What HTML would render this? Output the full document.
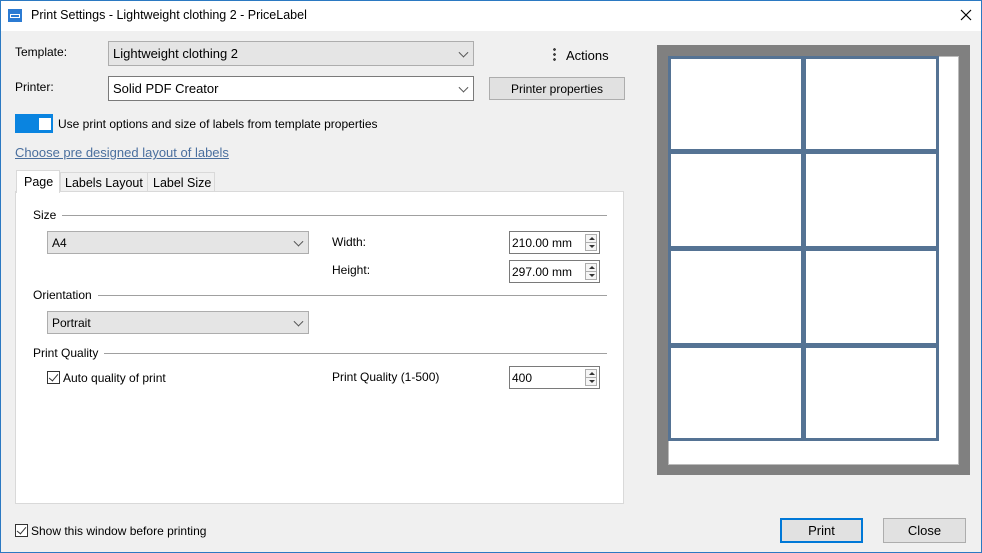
<!DOCTYPE html>
<html><head><style>
*{box-sizing:border-box;margin:0;padding:0}
body{width:982px;height:553px;overflow:hidden;background:#f0f0f0;font-family:"Liberation Sans",Arial,sans-serif;font-size:12px;color:#000;position:relative}
.a{position:absolute}
.combo{position:absolute;border:1px solid #adadad;background:#e5e5e5;padding-left:4px;display:flex;align-items:center;font-size:13px}
.combo.w{background:#fff;border-color:#7a7a7a}
.chev{position:absolute;right:6px;top:50%;width:7px;height:7px;border-right:1px solid #555;border-bottom:1px solid #555;transform:translateY(-70%) rotate(45deg)}
.spin{position:absolute;background:#fff;border:1px solid #7a7a7a;padding-left:2px;display:flex;align-items:center;font-size:12px}
.sb{position:absolute;right:2px;top:2px;width:12px;height:17px;border:1px solid #adadad;background:#f5f5f5}
.sb:before{content:"";position:absolute;left:3px;top:2px;border:3px solid transparent;border-bottom:3px solid #333;border-top:0}
.sb:after{content:"";position:absolute;left:3px;bottom:2px;border:3px solid transparent;border-top:3px solid #333;border-bottom:0}
.sb i{position:absolute;left:0;right:0;top:7px;border-top:1px solid #adadad}
.grp{position:absolute;height:1px}
.grp span{position:absolute;left:0;top:-7px;background:#fff;padding-right:6px}
.grp b{position:absolute;left:0;right:0;top:0;border-top:1px solid #a0a0a0}
.cb{position:absolute;width:13px;height:13px;border:1px solid #333;background:#fff}
.cb:after{content:"";position:absolute;left:3px;top:0px;width:4px;height:8px;border-right:1.3px solid #333;border-bottom:1.3px solid #333;transform:rotate(40deg)}
.btn{position:absolute;background:#e1e1e1;border:1px solid #adadad;display:flex;align-items:center;justify-content:center;font-size:12px}
</style></head><body>
<div class="a" style="left:0;top:0;width:982px;height:553px;border:1px solid #2b79c2"></div>
<div class="a" style="left:1px;top:1px;width:980px;height:30px;background:#fff"></div>
<div class="a" style="left:8px;top:9px;width:14px;height:13px;background:#2b7bd3"><div class="a" style="left:2px;top:5px;width:10px;height:4px;border:1px solid #fff"></div></div>
<div class="a" style="left:31px;top:8px;font-size:12.5px">Print Settings - Lightweight clothing 2 - PriceLabel</div>
<svg class="a" style="left:960px;top:9px" width="12" height="12"><path d="M1 1L11 11M11 1L1 11" stroke="#000" stroke-width="1.2"/></svg>

<div class="a" style="left:15px;top:45px">Template:</div>
<div class="combo" style="left:108px;top:41px;width:366px;height:25px">Lightweight clothing 2<i class="chev"></i></div>
<div class="a" style="left:553px;top:47px;width:3px;height:14px;background:radial-gradient(circle,#444 1.3px,transparent 1.5px) 0 0/3px 5px"></div>
<div class="a" style="left:566px;top:48px;font-size:13px">Actions</div>

<div class="a" style="left:15px;top:80px">Printer:</div>
<div class="combo w" style="left:108px;top:76px;width:366px;height:25px">Solid PDF Creator<i class="chev"></i></div>
<div class="btn" style="left:489px;top:77px;width:136px;height:23px">Printer properties</div>

<div class="a" style="left:15px;top:114px;width:38px;height:19px;background:#0a84e0"><div class="a" style="left:24px;top:4px;width:12px;height:12px;background:#fff"></div></div>
<div class="a" style="left:58px;top:117px">Use print options and size of labels from template properties</div>
<div class="a" style="left:15px;top:145px;font-size:13px;color:#4a6f9e;text-decoration:underline">Choose pre designed layout of labels</div>

<div class="a" style="left:15px;top:191px;width:609px;height:313px;background:#fff;border:1px solid #d9d9d9"></div>
<div class="a" style="left:16px;top:170px;width:44px;height:23px;background:#fff;border:1px solid #d9d9d9;border-bottom:none;padding:4px 0 0 7px;font-size:12.5px">Page</div>
<div class="a" style="left:60px;top:172px;width:88px;height:19px;border:1px solid #d9d9d9;border-bottom:none;padding:3px 0 0 4px;font-size:12.5px">Labels Layout</div>
<div class="a" style="left:148px;top:172px;width:67px;height:19px;border:1px solid #d9d9d9;border-bottom:none;border-left:none;padding:3px 0 0 5px;font-size:12.5px">Label Size</div>

<div class="grp" style="left:33px;width:574px;top:215px"><b></b><span>Size</span></div>
<div class="combo" style="left:47px;top:231px;width:262px;height:23px;font-size:12px">A4<i class="chev"></i></div>
<div class="a" style="left:332px;top:235px">Width:</div>
<div class="spin" style="left:509px;top:231px;width:91px;height:23px">210.00 mm<div class="sb"><i></i></div></div>
<div class="a" style="left:332px;top:263px">Height:</div>
<div class="spin" style="left:509px;top:260px;width:91px;height:23px">297.00 mm<div class="sb"><i></i></div></div>

<div class="grp" style="left:33px;width:574px;top:295px"><b></b><span>Orientation</span></div>
<div class="combo" style="left:47px;top:311px;width:262px;height:23px;font-size:12px">Portrait<i class="chev"></i></div>

<div class="grp" style="left:33px;width:574px;top:353px"><b></b><span>Print Quality</span></div>
<div class="cb" style="left:47px;top:371px"></div>
<div class="a" style="left:63px;top:371px">Auto quality of print</div>
<div class="a" style="left:332px;top:370px">Print Quality (1-500)</div>
<div class="spin" style="left:509px;top:366px;width:91px;height:23px">400<div class="sb"><i></i></div></div>

<div class="cb" style="left:15px;top:524px"></div>
<div class="a" style="left:31px;top:524px">Show this window before printing</div>

<div class="a" style="left:657px;top:45px;width:313px;height:430px;background:#808080"></div>
<div class="a" style="left:668px;top:56px;width:291px;height:409px;background:#fff;border:1px solid #bbb"></div>
<div class="a" style="left:668px;top:56px;width:271px;height:385px;background:#557394">
<div class="a" style="left:3px;top:3px;width:130px;height:90px;background:#fff"></div>
<div class="a" style="left:138px;top:3px;width:130px;height:90px;background:#fff"></div>
<div class="a" style="left:3px;top:98px;width:130px;height:92px;background:#fff"></div>
<div class="a" style="left:138px;top:98px;width:130px;height:92px;background:#fff"></div>
<div class="a" style="left:3px;top:195px;width:130px;height:92px;background:#fff"></div>
<div class="a" style="left:138px;top:195px;width:130px;height:92px;background:#fff"></div>
<div class="a" style="left:3px;top:292px;width:130px;height:90px;background:#fff"></div>
<div class="a" style="left:138px;top:292px;width:130px;height:90px;background:#fff"></div>
</div>

<div class="btn" style="left:780px;top:518px;width:83px;height:25px;border:2px solid #0078d7;font-size:13px">Print</div>
<div class="btn" style="left:883px;top:518px;width:83px;height:25px;font-size:13px">Close</div>
</body></html>
